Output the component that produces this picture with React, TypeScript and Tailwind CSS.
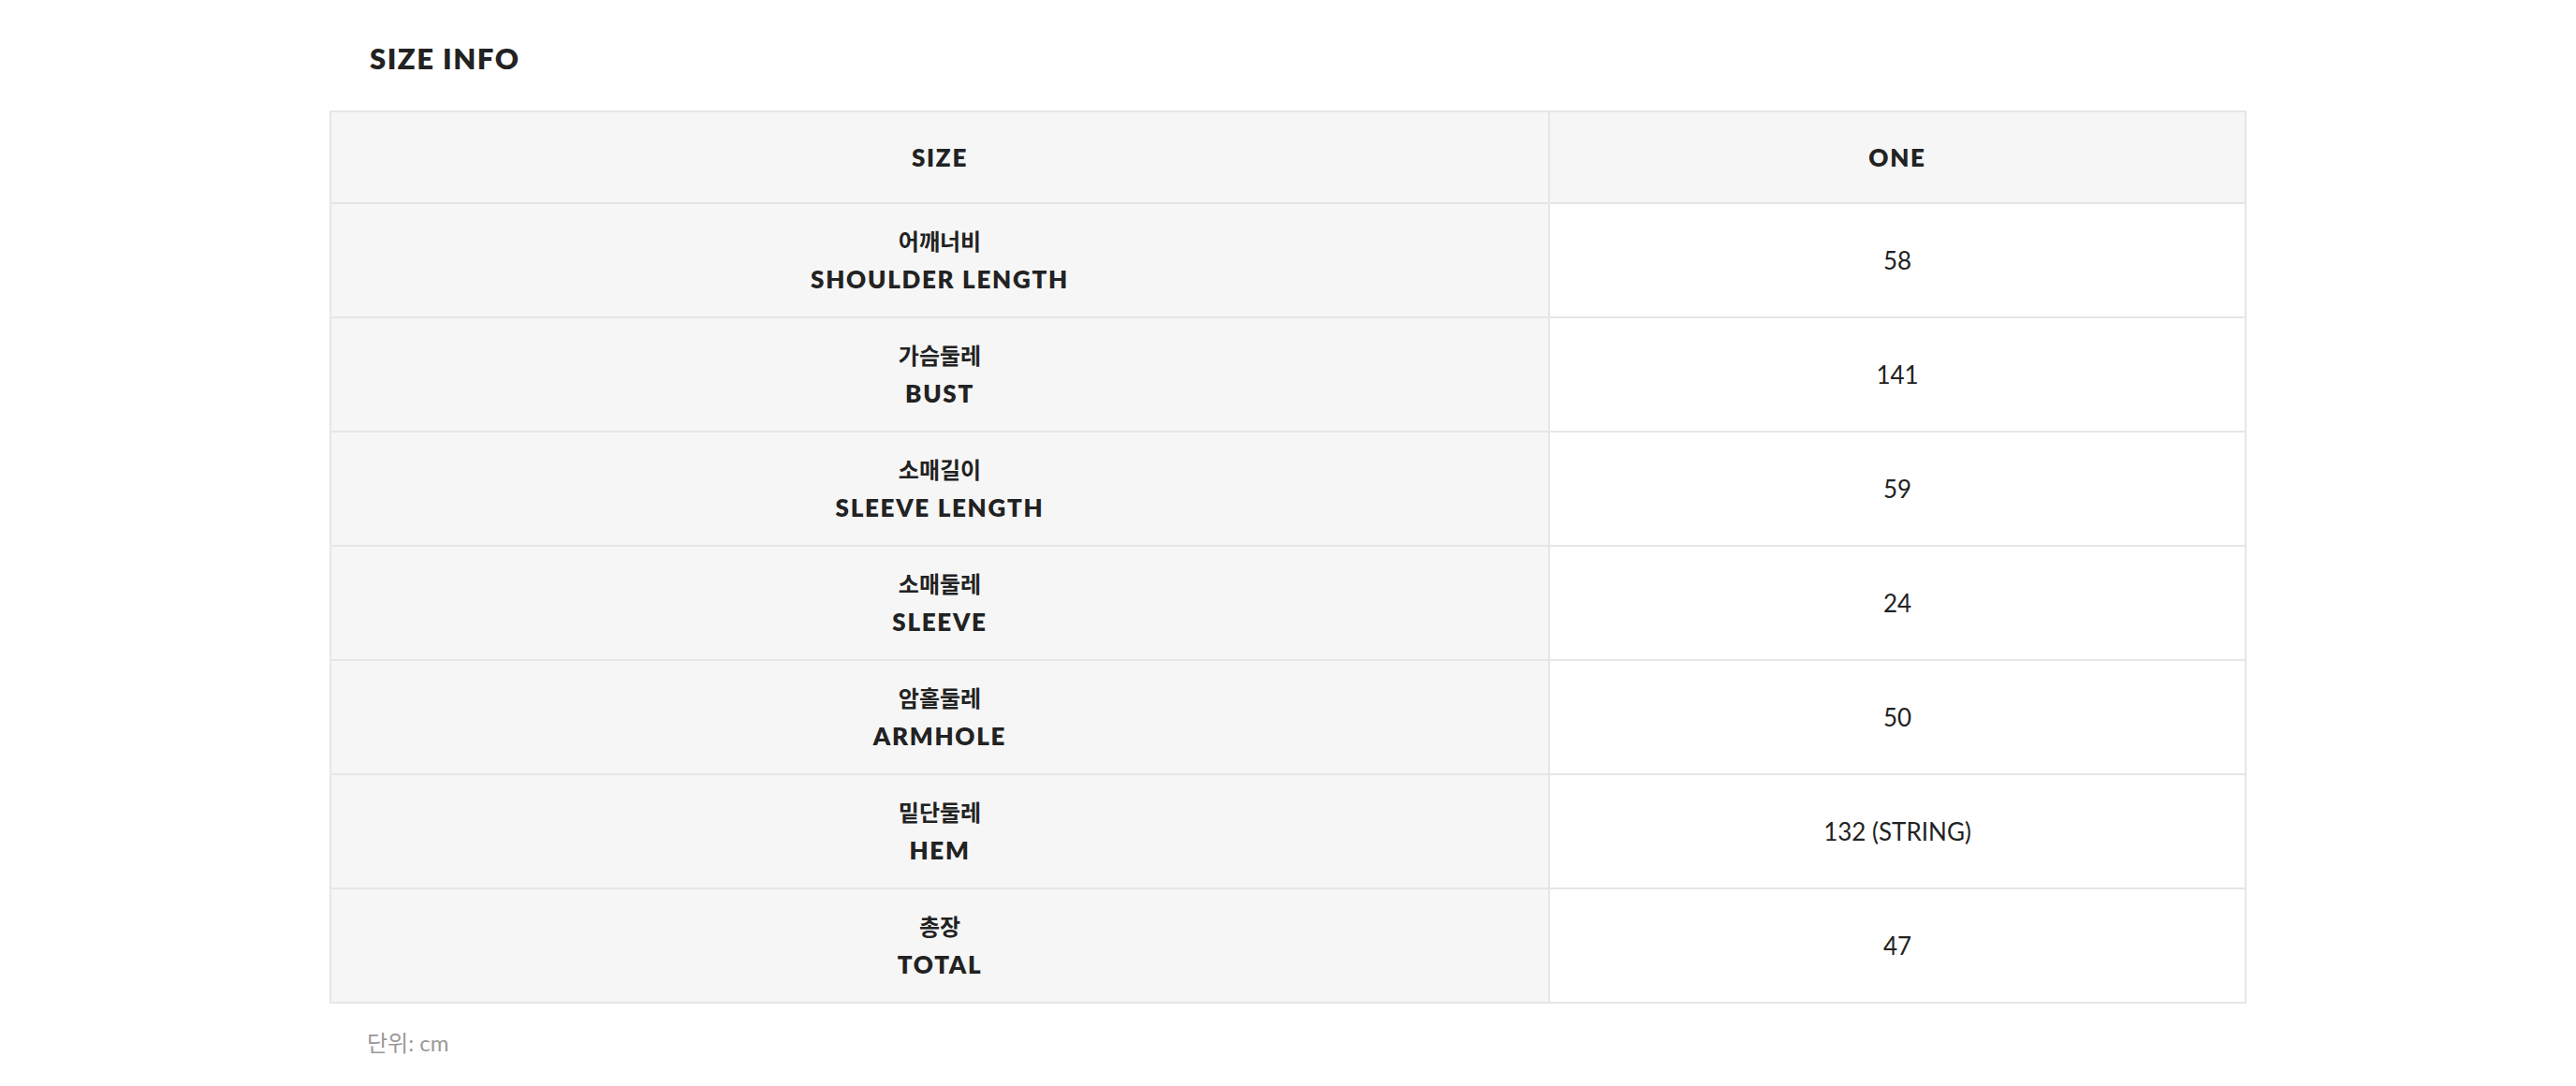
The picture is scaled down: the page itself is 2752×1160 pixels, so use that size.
import React from "react";

const rows: { ko: string; en: string; value: string }[] = [
  { ko: "어깨너비", en: "SHOULDER LENGTH", value: "58" },
  { ko: "가슴둘레", en: "BUST", value: "141" },
  { ko: "소매길이", en: "SLEEVE LENGTH", value: "59" },
  { ko: "소매둘레", en: "SLEEVE", value: "24" },
  { ko: "암홀둘레", en: "ARMHOLE", value: "50" },
  { ko: "밑단둘레", en: "HEM", value: "132 (STRING)" },
  { ko: "총장", en: "TOTAL", value: "47" },
];

export default function App() {
  return (
    <div className="min-h-[1160px] w-full bg-white font-['Lato','Noto_Sans_CJK_KR',sans-serif] text-[#222222]">
      <div className="mx-auto w-[2048px] pt-[44px]">
        <h2 className="mb-[38px] pl-[43px] text-[31px] font-extrabold leading-[36px] tracking-[1.5px]">SIZE INFO</h2>
        <div className="border-2 border-[#e6e6e6]">
          <div className="flex h-[98px] border-b-2 border-[#e6e6e6] bg-[#f6f6f6]">
            <div className="flex w-[1302px] items-center justify-center border-r-2 border-[#e6e6e6] text-[26px] font-extrabold leading-[40px] tracking-[1.7px]">
              SIZE
            </div>
            <div className="flex flex-1 items-center justify-center text-[26px] font-extrabold leading-[40px] tracking-[1.7px]">
              ONE
            </div>
          </div>
          {rows.map((r, i) => (
            <div
              key={r.en}
              className={
                i < rows.length - 1
                  ? "flex h-[122px] border-b-2 border-[#e6e6e6]"
                  : "flex h-[120px]"
              }
            >
              <div className="flex w-[1302px] flex-col items-center justify-center border-r-2 border-[#e6e6e6] bg-[#f6f6f6] text-center">
                <div className="text-[24px] font-bold leading-[40px]">{r.ko}</div>
                <div className="text-[26px] font-extrabold leading-[40px] tracking-[1.7px]">{r.en}</div>
              </div>
              <div className="flex flex-1 items-center justify-center bg-white text-[26px] leading-[40px]">
                {r.value}
              </div>
            </div>
          ))}
        </div>
        <p className="mt-6 px-10 text-[24px] leading-[36px] text-[#999999]">단위: cm</p>
      </div>
    </div>
  );
}
